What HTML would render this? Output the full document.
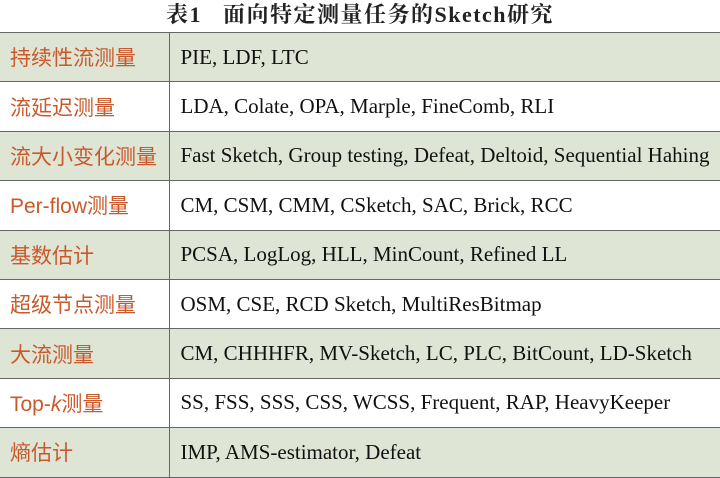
<!DOCTYPE html>
<html><head><meta charset="utf-8"><style>
body{margin:0;width:720px;height:477px;background:#fff;overflow:hidden}
.t{position:absolute;top:0;left:0;width:720px;height:32px;text-align:center;font:bold 22px "Liberation Serif","Noto Serif CJK SC",serif;line-height:30px;color:#222;letter-spacing:1.5px}
table{position:absolute;top:32px;left:0;width:722px;border-collapse:collapse}
td{height:49.4px;border-top:1.5px solid #666;padding:0;box-sizing:border-box}
tr:last-child td{border-bottom:1.5px solid #666}
td.a{width:169px;border-right:1.5px solid #666;padding-left:10px;color:#c9592b;font:21px "Liberation Sans","Noto Sans CJK SC",sans-serif;white-space:nowrap}
td.b{padding-left:11px;font:21px "Liberation Serif",serif;color:#111;white-space:nowrap}
tr.g td{background:#dee5d4}
</style></head><body>
<div class="t">表1&nbsp;&nbsp;&nbsp;面向特定测量任务的Sketch研究</div>
<table>
<tr class="g"><td class="a">持续性流测量</td><td class="b">PIE, LDF, LTC</td></tr>
<tr><td class="a">流延迟测量</td><td class="b">LDA, Colate, OPA, Marple, FineComb, RLI</td></tr>
<tr class="g"><td class="a">流大小变化测量</td><td class="b">Fast Sketch, Group testing, Defeat, Deltoid, Sequential Hahing</td></tr>
<tr><td class="a">Per-flow测量</td><td class="b">CM, CSM, CMM, CSketch, SAC, Brick, RCC</td></tr>
<tr class="g"><td class="a">基数估计</td><td class="b">PCSA, LogLog, HLL, MinCount, Refined LL</td></tr>
<tr><td class="a">超级节点测量</td><td class="b">OSM, CSE, RCD Sketch, MultiResBitmap</td></tr>
<tr class="g"><td class="a">大流测量</td><td class="b">CM, CHHHFR, MV-Sketch, LC, PLC, BitCount, LD-Sketch</td></tr>
<tr><td class="a">Top-<i>k</i>测量</td><td class="b">SS, FSS, SSS, CSS, WCSS, Frequent, RAP, HeavyKeeper</td></tr>
<tr class="g"><td class="a">熵估计</td><td class="b">IMP, AMS-estimator, Defeat</td></tr>
</table>
</body></html>
